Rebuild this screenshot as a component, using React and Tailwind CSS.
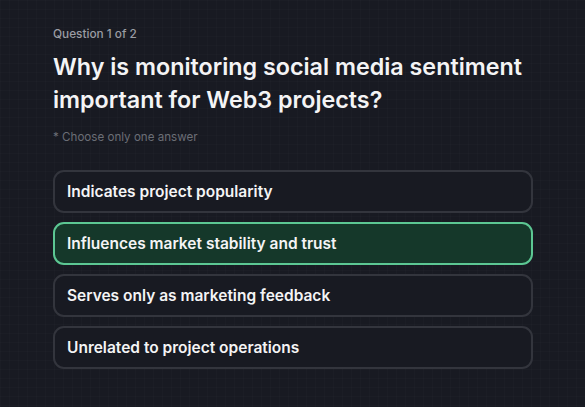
export default function App() {
  const options = [
    "Indicates project popularity",
    "Influences market stability and trust",
    "Serves only as marketing feedback",
    "Unrelated to project operations",
  ];
  return (
    <div
      className="w-[585px] h-[407px] bg-[#181a22] bg-[linear-gradient(rgba(255,255,255,0.012)_1px,transparent_1px),linear-gradient(90deg,rgba(255,255,255,0.012)_1px,transparent_1px)] bg-[size:9px_9px] overflow-hidden"
      style={{ fontFamily: "Inter, 'Noto Sans', sans-serif" }}
    >
      <div className="pl-[53px] pt-[26px] w-[533px]">
        <div className="text-[11.8px] leading-[16px] text-[#9a9ca3] font-medium">Question 1 of 2</div>
        <h1 className="mt-[8px] text-[23.3px] leading-[33px] font-semibold text-[#f4f4f5]">
          Why is monitoring social media sentiment important for Web3 projects?
        </h1>
        <div className="mt-[13px] text-[11.6px] leading-[16px] text-[#6b6e76]">* Choose only one answer</div>
        <div className="mt-[25px] flex flex-col gap-[9px]">
          {options.map((o, i) => (
            <div
              key={i}
              className={
                i === 1
                  ? "h-[43px] flex items-center px-[12px] rounded-[11px] border-2 border-[#5cc793] bg-[#15382a] text-[15.5px] font-semibold text-[#f4f4f5]"
                  : "h-[43px] flex items-center px-[12px] rounded-[11px] border-2 border-[#33353d] bg-[#181a22] text-[15.5px] font-semibold text-[#f4f4f5]"
              }
            >
              {o}
            </div>
          ))}
        </div>
      </div>
    </div>
  );
}
